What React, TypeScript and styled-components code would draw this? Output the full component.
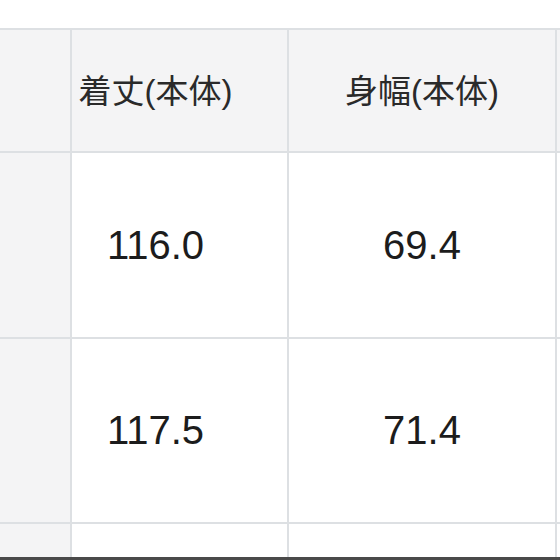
import React from 'react';
import styled, {createGlobalStyle} from 'styled-components';

const Global = createGlobalStyle`
  * {
    margin: 0;
    box-sizing: border-box;
  }
  body {
    background: #ffffff;
    font-family: "Liberation Sans", "Noto Sans CJK JP", sans-serif;
  }
`

const Page = styled.div`
  width: 560px;
  height: 560px;
  overflow: hidden;
  display: flex;
  flex-direction: column;
  padding-top: 28px;
  background: #ffffff;
`

const SizeTable = styled.div`
  flex: 1;
  display: grid;
  grid-template-columns: 70px 215px 266px 1fr;
  grid-template-rows: 121px 184px 183px 1fr;
  gap: 2px;
  padding-top: 2px;
  background: #dde0e3;
  overflow: hidden;
`

const Cell = styled.div<{ $head?: boolean; $side?: boolean; $shift?: boolean }>`
  display: flex;
  align-items: center;
  justify-content: center;
  padding-right: ${p => (p.$shift ? '48px' : '0')};
  padding-bottom: ${p => (p.$head ? '4px' : '0')};
  background: ${p => (p.$head || p.$side ? '#f4f4f5' : '#ffffff')};
  color: ${p => (p.$head ? '#2a2a2a' : '#1c1c1c')};
  font-size: ${p => (p.$head ? '33px' : '40px')};
  white-space: nowrap;
`

const BottomEdge = styled.div`
  height: 3px;
  background: #4a4a4a;
`

const rows = [
    {length: '116.0', width: '69.4'},
    {length: '117.5', width: '71.4'},
    {length: '', width: ''},
];

const App = () => {
    return (
        <>
            <Global/>
            <Page>
                <SizeTable>
                    <Cell $head/>
                    <Cell $head $shift>着丈(本体)</Cell>
                    <Cell $head>身幅(本体)</Cell>
                    <Cell $head/>
                    {rows.map((r, i) => (
                        <React.Fragment key={i}>
                            <Cell $side/>
                            <Cell $shift>{r.length}</Cell>
                            <Cell>{r.width}</Cell>
                            <Cell/>
                        </React.Fragment>
                    ))}
                </SizeTable>
                <BottomEdge/>
            </Page>
        </>
    );
}

export default App;
